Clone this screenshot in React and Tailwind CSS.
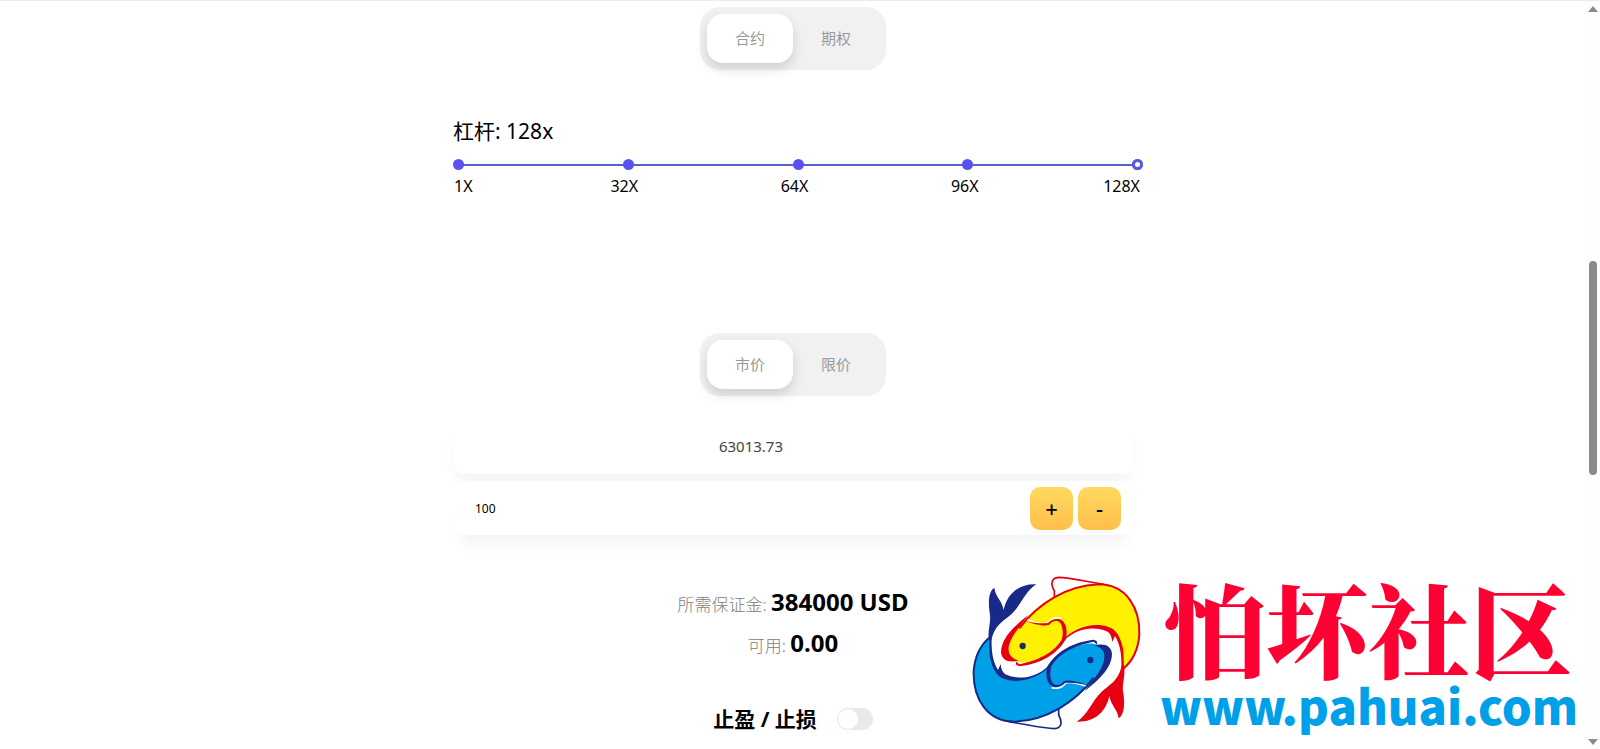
import { useState } from 'react';
import clsx from 'clsx';

const LEVERAGE_STEPS = ['1X', '32X', '64X', '96X', '128X'];

/**
 * SegmentedTabs - Pill switcher with two options
 * @param {string[]} options - Labels of the options
 * @param {string} label - Accessible name of the group
 */
const SegmentedTabs = ({ options, label }) => {
    const [active, setActive] = useState(options[0]);

    return (
        <div role="group" aria-label={label} className="mx-auto flex w-fit rounded-[20px] bg-[#f1f1f1] p-[7px]">
            {options.map((option) => (
                <button
                    key={option}
                    type="button"
                    aria-pressed={active === option}
                    onClick={() => setActive(option)}
                    className={clsx(
                        'h-[49px] rounded-2xl px-7 text-[15px] text-[#999]',
                        active === option && 'bg-white shadow-[0_6px_12px_rgba(0,0,0,0.14)]'
                    )}
                >
                    {option}
                </button>
            ))}
        </div>
    );
};

const LeverageSlider = ({ value, onChange }) => (
    <div className="-mr-[10px]">
        <div className="relative h-[11px]">
            <div className="absolute inset-0 flex items-center justify-between">
                <div className="absolute inset-x-1 h-[2px] bg-[#5a5fcb]"></div>
                {LEVERAGE_STEPS.map((step) => (
                    <span key={step} className="relative size-[11px] rounded-full bg-[#5a52f0]"></span>
                ))}
            </div>
            <input
                id="leverage"
                type="range"
                min="1"
                max="128"
                value={value}
                onChange={(e) => onChange(Number(e.target.value))}
                className="relative block h-[11px] w-full cursor-pointer appearance-none bg-transparent outline-none [&::-webkit-slider-thumb]:size-[11px] [&::-webkit-slider-thumb]:appearance-none [&::-webkit-slider-thumb]:rounded-full [&::-webkit-slider-thumb]:border-[3px] [&::-webkit-slider-thumb]:border-[#5a5add] [&::-webkit-slider-thumb]:bg-white"
            />
        </div>
        <div className="mt-1 grid grid-cols-[17fr_34fr_34fr_34fr_18fr] pr-[3px] pl-px text-center text-[16px] leading-6">
            {LEVERAGE_STEPS.map((step) => (
                <span key={step} className="first:text-left last:text-right">{step}</span>
            ))}
        </div>
    </div>
);

// One koi, the logo is made of two of them turned by half a circle
const Koi = ({ body, line, eye }) => (
    <g>
        <path d="M283 97 L283 78 C272 58 272 39 296 37 C330 38 380 50 432 58" fill="none" stroke={line} strokeWidth="5" />
        <path
            d="M168 289 C146 280 140 262 146 240 C172 170 275 62 415 58 C500 58 540 130 538 208 C535 255 515 290 489 312 C492 255 478 200 432 186 C385 180 345 192 318 220 C290 262 240 285 200 292 C190 294 178 292 168 289Z"
            fill={body}
        />
        <path d="M178 190 C235 115 320 62 415 58 C500 58 540 130 538 208 C535 255 515 290 489 312" fill="none" stroke={line} strokeWidth="6" />
        <path d="M205 150 C168 180 124 215 123 262 C125 285 145 295 176 287 C152 280 142 265 147 241 C158 205 185 180 205 150Z" fill={line} />
        <path d="M202 165 C228 174 248 179 262 174 C272 160 288 156 304 160" fill="none" stroke="#fff" strokeWidth="5" />
        <path d="M196 168 C228 180 255 184 267 180 C276 167 292 164 301 174 C310 188 310 212 304 226 C275 272 220 289 178 298 L167 289 L169 300 L178 304 C235 297 288 273 318 222 C323 195 319 170 298 162 C281 161 270 168 264 174 C245 177 220 173 196 168Z" fill={line} />
        <path d="M304 230 C345 183 405 172 445 186 C468 192 482 215 490 255 L492 312 L484 312 C486 262 478 235 465 213 L457 231 C456 215 450 205 443 200 C400 180 350 192 317 222Z" fill={line} />
        <path d="M485 303 C475 345 455 355 425 380 C395 408 385 448 350 470 C405 472 438 440 448 393 C454 425 472 430 476 460 C490 452 496 425 490 385 C484 360 498 330 492 300Z" fill={line} />
        <circle cx="188" cy="243" r="9.5" fill={eye} />
    </g>
);

const Watermark = () => (
    <div className="pointer-events-none absolute right-[22px] bottom-[9px] flex items-end gap-[10px]">
        <svg viewBox="0 0 570 525" className="h-[175px] w-[190px]" aria-hidden="true">
            <Koi body="#fff100" line="#e60012" eye="#16325c" />
            <g transform="rotate(180 289.5 264)">
                <Koi body="#00a0e9" line="#172a88" eye="#172a88" />
            </g>
        </svg>
        <div className="flex flex-col pb-[10px]">
            <span className="pl-1 font-['Noto_Serif_CJK_SC','Noto_Sans_CJK_SC',serif] text-[102px] leading-[106px] font-black text-[#ff0033]">怕坏社区</span>
            <span className="font-['Noto_Sans_CJK_SC',sans-serif] text-[47px] leading-[50px] font-black text-[#00a0e9]">www.pahuai.com</span>
        </div>
    </div>
);

const ScrollRail = () => (
    <div className="flex w-[14px] shrink-0 flex-col items-center bg-[#fdfdfd] pt-[5px] pb-1" aria-hidden="true">
        <svg viewBox="0 0 10 6" className="h-[6px] w-[10px]"><path d="M5 0 L10 6 H0Z" fill="#8b8b8b" /></svg>
        <div className="mt-[249px] h-[214px] w-2 rounded-full bg-[#8b8b8b]"></div>
        <svg viewBox="0 0 10 6" className="mt-auto h-[6px] w-[10px]"><path d="M5 6 L10 0 H0Z" fill="#8b8b8b" /></svg>
    </div>
);

const App = () => {
    const [leverage, setLeverage] = useState(128);
    const [amount, setAmount] = useState(100);
    const [stopEnabled, setStopEnabled] = useState(false);

    return (
        <div className="relative flex min-h-screen overflow-hidden border-t border-[#ececec] bg-white font-['Noto_Sans','Noto_Sans_CJK_SC',sans-serif] text-black">
            <main className="flex-1">
                <div className="mx-auto w-full max-w-[680px] pt-[6px]">
                    <SegmentedTabs options={['合约', '期权']} label="交易类型" />

                    {/* Leverage */}
                    <section className="mt-[45px]">
                        <label htmlFor="leverage" className="mb-3 block text-[21px] leading-8">杠杆: {leverage}x</label>
                        <LeverageSlider value={leverage} onChange={setLeverage} />
                    </section>

                    <div className="mt-[135px]">
                        <SegmentedTabs options={['市价', '限价']} label="委托类型" />
                    </div>

                    {/* Price and amount */}
                    <div className="mt-6 rounded-xl pr-[84px] pb-[2px] shadow-[0_12px_16px_-4px_rgba(0,0,0,0.05)]">
                        <input
                            aria-label="价格"
                            readOnly
                            value="63013.73"
                            className="block h-[52px] w-full bg-transparent text-center text-[15px] text-[#444] outline-none"
                        />
                    </div>
                    <div className="relative mt-[7px] flex h-[54px] items-center gap-[5px] rounded-xl bg-white pr-3 pl-[22px] shadow-[0_16px_16px_-8px_rgba(0,0,0,0.05)]">
                        <input
                            aria-label="数量"
                            value={amount}
                            onChange={(e) => setAmount(Number(e.target.value) || 0)}
                            className="h-10 min-w-0 flex-1 bg-transparent text-[12px] outline-none"
                        />
                        <button
                            type="button"
                            onClick={() => setAmount(amount + 1)}
                            className="size-[43px] rounded-[10px] bg-linear-to-b from-[#ffd95f] to-[#ffbf4b] text-[22px] font-medium"
                        >
                            +
                        </button>
                        <button
                            type="button"
                            onClick={() => setAmount(Math.max(0, amount - 1))}
                            className="size-[43px] rounded-[10px] bg-linear-to-b from-[#ffd95f] to-[#ffbf4b] text-[22px] font-medium"
                        >
                            -
                        </button>
                    </div>

                    {/* Margin */}
                    <div className="mt-12 text-center text-[17px] leading-[38px] text-[#808080]">
                        <p>
                            <span className="font-light">所需保证金: </span>
                            <strong className="text-[24px] font-bold text-black">384000 USD</strong>
                        </p>
                        <p>
                            <span className="font-light">可用: </span>
                            <strong className="text-[24px] font-bold text-black">0.00</strong>
                        </p>
                    </div>

                    <label className="mt-[38px] flex items-center justify-center gap-5 text-[21px] leading-8 font-bold">
                        止盈 / 止损
                        <input
                            type="checkbox"
                            role="switch"
                            checked={stopEnabled}
                            onChange={(e) => setStopEnabled(e.target.checked)}
                            className="h-[22px] w-9 cursor-pointer appearance-none rounded-full bg-[#e8e9ee] p-px before:block before:size-5 before:rounded-full before:bg-white checked:bg-[#5a52f0] checked:before:ml-auto"
                        />
                    </label>
                </div>
            </main>

            <ScrollRail />
            <Watermark />
        </div>
    );
};

export default App;
